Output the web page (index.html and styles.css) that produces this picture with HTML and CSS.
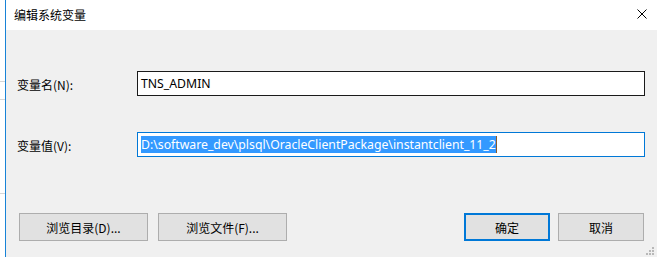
FILE: index.html
```html
<!DOCTYPE html>
<html lang="zh-CN">
<head>
    <meta charset="UTF-8">
    <meta name="viewport" content="width=device-width, initial-scale=1.0">
    <title>编辑系统变量</title>
    <link rel="stylesheet" href="styles.css">
</head>
<body>
    <div class="behind"></div>
    <div class="dialog">
        <div class="titlebar">
            <span class="title">编辑系统变量</span>
            <svg class="close" width="10" height="10" viewBox="0 0 10 10">
                <path d="M0.5 0.5 L9.5 9.5 M9.5 0.5 L0.5 9.5" stroke="#000" stroke-width="1" fill="none"/>
            </svg>
        </div>
        <div class="content">
            <div class="row">
                <label class="label">变量名(N):</label>
                <div class="field">TNS_ADMIN</div>
            </div>
            <div class="row">
                <label class="label">变量值(V):</label>
                <div class="field focused"><span class="selected">D:\software_dev\plsql\OracleClientPackage\instantclient_11_2</span><span class="caret"></span></div>
            </div>
            <div class="buttons">
                <div class="group">
                    <button class="btn wide">浏览目录(D)...</button>
                    <button class="btn wide">浏览文件(F)...</button>
                </div>
                <div class="group tight">
                    <button class="btn default">确定</button>
                    <button class="btn">取消</button>
                </div>
            </div>
        </div>
        <svg class="grip" width="9" height="9" viewBox="0 0 9 9">
            <rect x="6" y="0" width="2" height="2" fill="#b8b8b8"/>
            <rect x="3" y="3" width="2" height="2" fill="#b8b8b8"/>
            <rect x="6" y="3" width="2" height="2" fill="#b8b8b8"/>
            <rect x="0" y="6" width="2" height="2" fill="#b8b8b8"/>
            <rect x="3" y="6" width="2" height="2" fill="#b8b8b8"/>
            <rect x="6" y="6" width="2" height="2" fill="#b8b8b8"/>
        </svg>
    </div>
</body>
</html>
```

FILE: styles.css
```css
body {
    margin: 0;
    display: flex;
    height: 257px;
    overflow: hidden;
    font-family: "Noto Sans", "Noto Sans CJK SC", sans-serif;
    font-size: 12px;
    color: #000;
    background-color: #fff;
}
.behind {
    width: 5px;
    flex: none;
    background:
        linear-gradient(#d6d6d6, #d6d6d6) 0 81px / 100% 1px no-repeat,
        linear-gradient(#d6d6d6, #d6d6d6) 0 99px / 100% 1px no-repeat,
        linear-gradient(#d6d6d6, #d6d6d6) 0 193px / 100% 1px no-repeat,
        #fff;
}
.dialog {
    position: relative;
    flex: 1;
    display: flex;
    flex-direction: column;
    border-left: 1px solid #1883d7;
    background-color: #f0f0f0;
}
.titlebar {
    height: 30px;
    flex: none;
    display: flex;
    align-items: center;
    justify-content: space-between;
    padding: 0 10px 0 8px;
    background-color: #fff;
}
.title {
    font-family: "Noto Sans CJK SC", sans-serif;
    font-size: 12px;
    margin-top: -1px;
}
.close {
    margin-top: -2px;
}
.content {
    padding: 41px 12px 0 11px;
    display: flex;
    flex-direction: column;
}
.row {
    display: flex;
    align-items: center;
    height: 25px;
    margin-bottom: 36px;
}
.label {
    width: 120px;
    flex: none;
    font-family: "Noto Sans CJK SC", sans-serif;
    margin-top: 1px;
}
.field {
    flex: 1;
    height: 25px;
    box-sizing: border-box;
    border: 1px solid #1a1a1a;
    background-color: #fff;
    padding: 0 0 0 3px;
    display: flex;
    align-items: center;
    font-size: 12.25px;
    white-space: nowrap;
}
.field.focused {
    border-color: #0078d7;
}
.selected {
    background-color: #3399ff;
    color: #fff;
    line-height: 17px;
}
.caret {
    width: 1px;
    height: 17px;
    background-color: #8a5a2a;
}
.buttons {
    display: flex;
    justify-content: space-between;
    padding: 0 1px 0 2px;
    margin-top: 20px;
}
.group {
    display: flex;
    gap: 10px;
}
.group.tight {
    gap: 8px;
}
.btn {
    width: 86px;
    height: 28px;
    box-sizing: border-box;
    border: 1px solid #adadad;
    background-color: #e1e1e1;
    font-family: "Noto Sans CJK SC", sans-serif;
    font-size: 12px;
    color: #000;
    padding: 0;
    margin: 0;
}
.btn.wide {
    width: 129px;
}
.btn.default {
    border: 2px solid #0078d7;
}
.grip {
    position: absolute;
    right: 2px;
    bottom: 1px;
}
```
